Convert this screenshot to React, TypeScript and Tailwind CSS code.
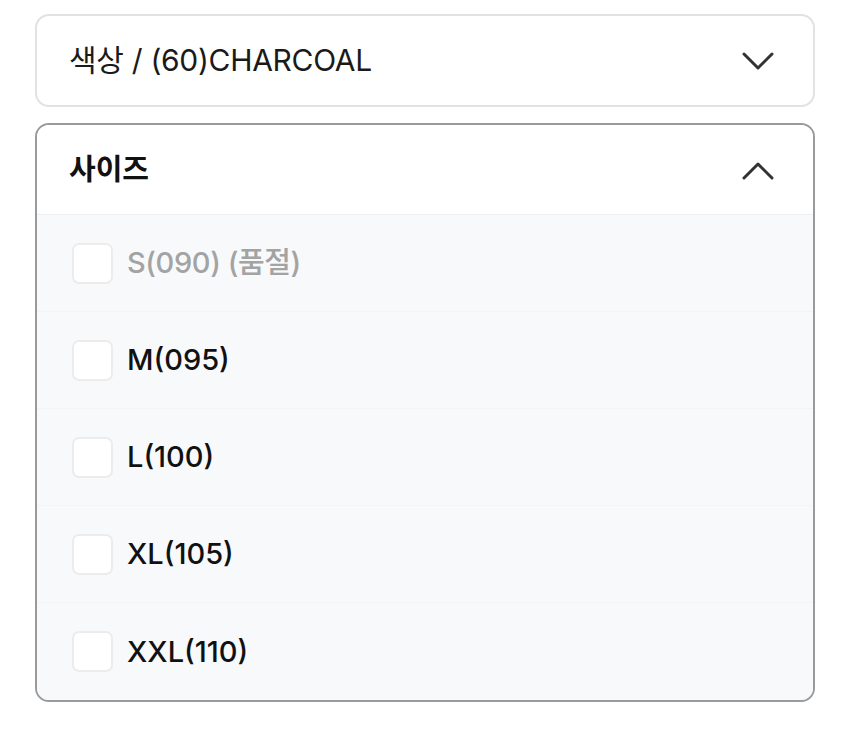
import React from "react";

const Chevron = ({ up }: { up?: boolean }) => (
  <svg width="34" height="20" viewBox="0 0 34 20" fill="none">
    <path
      d={up ? "M3 18 L17 4 L31 18" : "M3 3 L17 17 L31 3"}
      stroke="#333"
      strokeWidth="3"
      strokeLinecap="round"
      strokeLinejoin="round"
    />
  </svg>
);

const options = [
  { label: "S(090) (품절)", disabled: true },
  { label: "M(095)" },
  { label: "L(100)" },
  { label: "XL(105)" },
  { label: "XXL(110)" },
];

export default function App() {
  return (
    <div
      className="w-[850px] h-[736px] bg-white px-[35px] pt-[14px] flex flex-col gap-[16px]"
      style={{ fontFamily: 'Inter, "Noto Sans CJK KR", sans-serif' }}
    >
      <div className="h-[93px] rounded-[14px] border-2 border-[#e2e2e2] bg-white flex items-center justify-between pl-[32px] pr-[38px]">
        <span className="text-[30px] text-[#1a1a1a] tracking-[-0.3px]">색상 / (60)CHARCOAL</span>
        <Chevron />
      </div>
      <div className="rounded-[14px] border-2 border-[#9a9a9a] overflow-hidden flex flex-col">
        <div className="h-[90px] bg-white flex items-center justify-between pl-[32px] pr-[38px] border-b border-[#eeeff1]">
          <span className="text-[29px] font-bold text-[#111]">사이즈</span>
          <Chevron up />
        </div>
        <div className="flex flex-col bg-[#f8f9fb]">
          {options.map((o, i) => (
            <div
              key={i}
              className={`h-[97px] flex items-center gap-[14px] pl-[35px] ${i < options.length - 1 ? "border-b border-[#f3f4f6]" : ""}`}
            >
              <div className="w-[41px] h-[41px] rounded-[7px] border-2 border-[#ececec] bg-white" />
              <span
                className={`text-[29px] font-medium ${o.disabled ? "text-[#a3a3a3] tracking-[-0.4px]" : "text-[#111]"}`}
              >
                {o.label}
              </span>
            </div>
          ))}
        </div>
      </div>
    </div>
  );
}
